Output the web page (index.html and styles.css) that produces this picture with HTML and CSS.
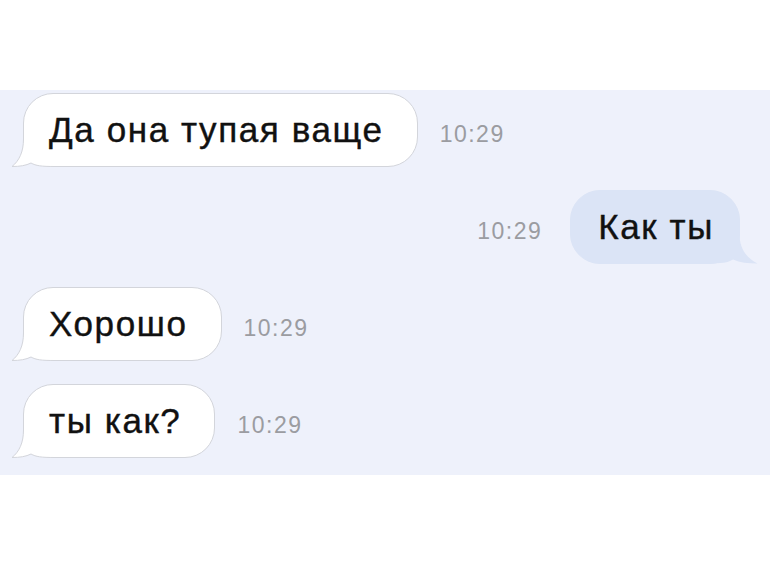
FILE: index.html
```html
<!DOCTYPE html>
<html lang="ru">
<head>
  <meta charset="UTF-8">
  <meta name="viewport" content="width=device-width, initial-scale=1.0">
  <title>Сообщения</title>
  <link rel="stylesheet" href="styles.css">
</head>
<body>
  <div class="chat">

    <!-- входящее -->
    <div class="row">
      <div class="bubble in">
        <svg class="tail" width="44" height="40" viewBox="0 0 44 40">
          <path class="tail-fill" d="M12.5 0 V12 C12.5 25 8 34 1 39.5 C9 39.5 15 38.5 20 36 C25 38.8 30 39.5 44 39.5 V0 Z"/>
          <path class="tail-line" d="M12.5 0 V12 C12.5 25 8 34 1 39.5 C9 39.5 15 38.5 20 36 C25 38.8 30 39.5 44 39.5"/>
        </svg>
        <span class="msg">Да она тупая ваще</span>
      </div>
      <span class="time">10:29</span>
    </div>

    <!-- исходящее -->
    <div class="row mine">
      <span class="time">10:29</span>
      <div class="bubble out">
        <svg class="tail" width="52" height="40" viewBox="0 0 52 40">
          <path class="tail-fill" d="M18.5 0 V10 C18.5 24 12 34 0.5 39.5 C10 39.5 18 38.5 25 35.5 C30 38.8 36 39.5 52 39.5 V0 Z"/>
        </svg>
        <span class="msg">Как ты</span>
      </div>
    </div>

    <div class="row">
      <div class="bubble in">
        <svg class="tail" width="44" height="40" viewBox="0 0 44 40">
          <path class="tail-fill" d="M12.5 0 V12 C12.5 25 8 34 1 39.5 C9 39.5 15 38.5 20 36 C25 38.8 30 39.5 44 39.5 V0 Z"/>
          <path class="tail-line" d="M12.5 0 V12 C12.5 25 8 34 1 39.5 C9 39.5 15 38.5 20 36 C25 38.8 30 39.5 44 39.5"/>
        </svg>
        <span class="msg">Хорошо</span>
      </div>
      <span class="time">10:29</span>
    </div>

    <div class="row">
      <div class="bubble in">
        <svg class="tail" width="44" height="40" viewBox="0 0 44 40">
          <path class="tail-fill" d="M12.5 0 V12 C12.5 25 8 34 1 39.5 C9 39.5 15 38.5 20 36 C25 38.8 30 39.5 44 39.5 V0 Z"/>
          <path class="tail-line" d="M12.5 0 V12 C12.5 25 8 34 1 39.5 C9 39.5 15 38.5 20 36 C25 38.8 30 39.5 44 39.5"/>
        </svg>
        <span class="msg">ты как?</span>
      </div>
      <span class="time">10:29</span>
    </div>

  </div>
</body>
</html>
```

FILE: styles.css
```css
body {
  margin: 0;
  background: #fff;
  font-family: "Liberation Sans", Arial, sans-serif;
}
.chat {
  margin-top: 90px;
  height: 385px;
  box-sizing: border-box;
  padding: 3px 30px 0 23px;
  background: #eef1fb;
  display: flex;
  flex-direction: column;
  gap: 23px;
}
.row {
  display: flex;
  align-items: baseline;
  gap: 22px;
}
.row.mine {
  justify-content: flex-end;
  gap: 28px;
}
.bubble {
  position: relative;
  font-size: 35px;
  letter-spacing: 1.6px;
  line-height: 42px;
  color: #111;
  -webkit-text-stroke: 0.4px #111;
  padding: 15px 33px 15px 25px;
  border: 1px solid #d3d5db;
  border-radius: 30px;
  background: #fff;
}
.bubble.out {
  padding: 15px 25px 15px 27px;
  background: #dbe4f6;
  border-color: #dbe4f6;
}
.msg {
  position: relative;
}
.tail {
  position: absolute;
  bottom: -1px;
  left: -13px;
}
.bubble.out .tail {
  left: auto;
  right: -19px;
  transform: scaleX(-1);
}
.tail-fill {
  fill: #fff;
}
.bubble.out .tail-fill {
  fill: #dbe4f6;
}
.tail-line {
  fill: none;
  stroke: #d3d5db;
  stroke-width: 1;
}
.time {
  font-size: 23px;
  letter-spacing: 1.5px;
  color: #9b9ca1;
}
```
